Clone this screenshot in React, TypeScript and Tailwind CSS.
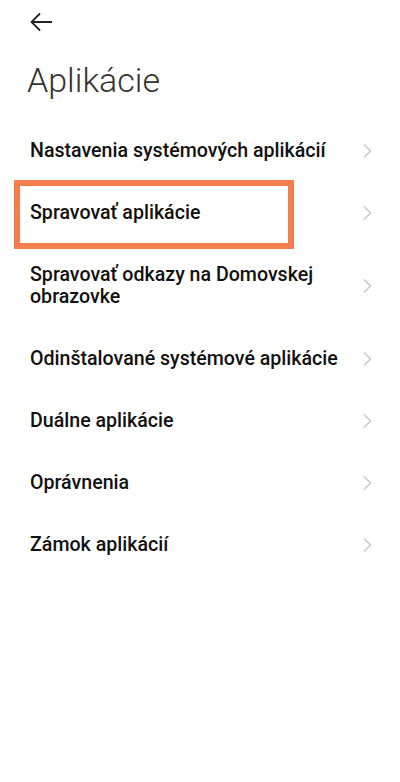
const items = [
  "Nastavenia systémových aplikácií",
  "Spravovať aplikácie",
  "Spravovať odkazy na Domovskej obrazovke",
  "Odinštalované systémové aplikácie",
  "Duálne aplikácie",
  "Oprávnenia",
  "Zámok aplikácií",
];

function Chevron() {
  return (
    <svg width="10" height="16" viewBox="0 0 10 16" className="shrink-0">
      <polyline
        points="2,1.5 8.5,8 2,14.5"
        fill="none"
        stroke="#c4c4c4"
        strokeWidth="1.4"
      />
    </svg>
  );
}

export default function App() {
  return (
    <div
      className="w-[400px] h-[782px] bg-white"
      style={{ fontFamily: "Roboto, 'Noto Sans', sans-serif" }}
    >
      <div className="pl-[29px] pt-[11px] h-[24px]">
        <svg width="24" height="22" viewBox="0 0 24 22">
          <path
            d="M23 11H2.5M11 2.5L2.5 11L11 19.5"
            fill="none"
            stroke="#222"
            strokeWidth="1.8"
          />
        </svg>
      </div>
      <h1 className="pl-[27px] mt-[36px] text-[34px] leading-[40px] font-light text-[#333]">
        Aplikácie
      </h1>
      <div className="mt-[20px]">
        {items.map((t, i) => (
          <div
            key={t}
            className="relative flex items-center justify-between pl-[30px] pr-[28px] py-[20px]"
          >
            <span className="text-[19.6px] leading-[22px] font-medium text-[#111] max-w-[320px]">
              {t}
            </span>
            <Chevron />
            {i === 1 && (
              <div className="absolute left-[14px] top-[-2px] w-[280px] h-[69px] border-[6px] border-[#f47f4c]" />
            )}
          </div>
        ))}
      </div>
    </div>
  );
}
